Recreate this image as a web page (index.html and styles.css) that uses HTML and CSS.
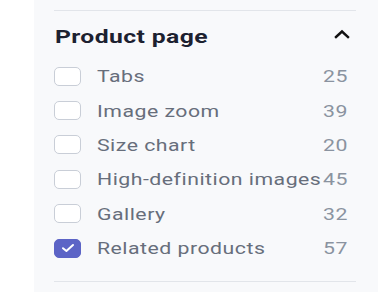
FILE: index.html
```html
<!DOCTYPE html>
<html>
<head>
<meta charset="utf-8">
<link rel="stylesheet" href="styles.css">
</head>
<body>
<div class="page">
  <div class="gutter"></div>
  <aside class="panel">
    <div class="divider"></div>
    <div class="section-head">
      <h2 class="title"><span class="stretch">Product page</span></h2>
      <svg class="chevron" width="16" height="10" viewBox="0 0 16 10"><path d="M2 8 L8 2.5 L14 8" fill="none" stroke="#111" stroke-width="2.4" stroke-linecap="square"/></svg>
    </div>
    <ul class="list">
      <li class="item"><span class="box"></span><span class="label"><span class="stretch">Tabs</span></span><span class="count"><span class="stretch">25</span></span></li>
      <li class="item"><span class="box"></span><span class="label"><span class="stretch">Image zoom</span></span><span class="count"><span class="stretch">39</span></span></li>
      <li class="item"><span class="box"></span><span class="label"><span class="stretch">Size chart</span></span><span class="count"><span class="stretch">20</span></span></li>
      <li class="item"><span class="box"></span><span class="label"><span class="stretch">High-definition images</span></span><span class="count"><span class="stretch">45</span></span></li>
      <li class="item"><span class="box"></span><span class="label"><span class="stretch">Gallery</span></span><span class="count"><span class="stretch">32</span></span></li>
      <li class="item"><span class="box checked"><svg width="14" height="10" viewBox="0 0 14 10"><path d="M2 5.2 L5.4 8 L12 2" fill="none" stroke="#fff" stroke-width="2" stroke-linecap="round" stroke-linejoin="round"/></svg></span><span class="label"><span class="stretch">Related products</span></span><span class="count"><span class="stretch">57</span></span></li>
    </ul>
    <div class="divider"></div>
  </aside>
</div>
</body>
</html>
```
FILE: styles.css
```css
* { box-sizing: border-box; }
html, body { margin: 0; padding: 0; }
body { font-family: Roboto, "Liberation Sans", sans-serif; background: #fff; width: 378px; height: 292px; overflow: hidden; }
.page { display: flex; height: 292px; }
.gutter { width: 34px; background: #fff; }
.panel { flex: 1; background: #f8f9fb; padding: 10px 22px 0 20px; }
.divider { height: 1px; background: #e2e5ea; }
.section-head { display: flex; align-items: center; justify-content: space-between; height: 48px; padding: 2px 6px 0 1px; }
.title { margin: 0; font-size: 19px; font-weight: 700; color: #1c2130; letter-spacing: 0.3px; }
.stretch { display: inline-block; transform: scaleX(1.25); transform-origin: left center; white-space: nowrap; }
.title .stretch { transform: scaleX(1.3); }
.count .stretch { transform-origin: right center; }
.chevron { display: block; margin-top: -4px; }
.list { list-style: none; margin: 0; padding: 0 8px 16px 0; }
.item { display: flex; align-items: center; height: 34.4px; }
.box { width: 27px; height: 19px; border: 1.5px solid #c9ced7; border-radius: 5px; background: #fff; flex: none; display: flex; align-items: center; justify-content: center; }
.box.checked { background: #5c64c6; border-color: #5c64c6; }
.label { flex: 1; margin-left: 16px; font-size: 17px; color: #676e7b; letter-spacing: 0.4px; }
.count { font-size: 17px; color: #8a93a0; letter-spacing: 0.4px; }
```
